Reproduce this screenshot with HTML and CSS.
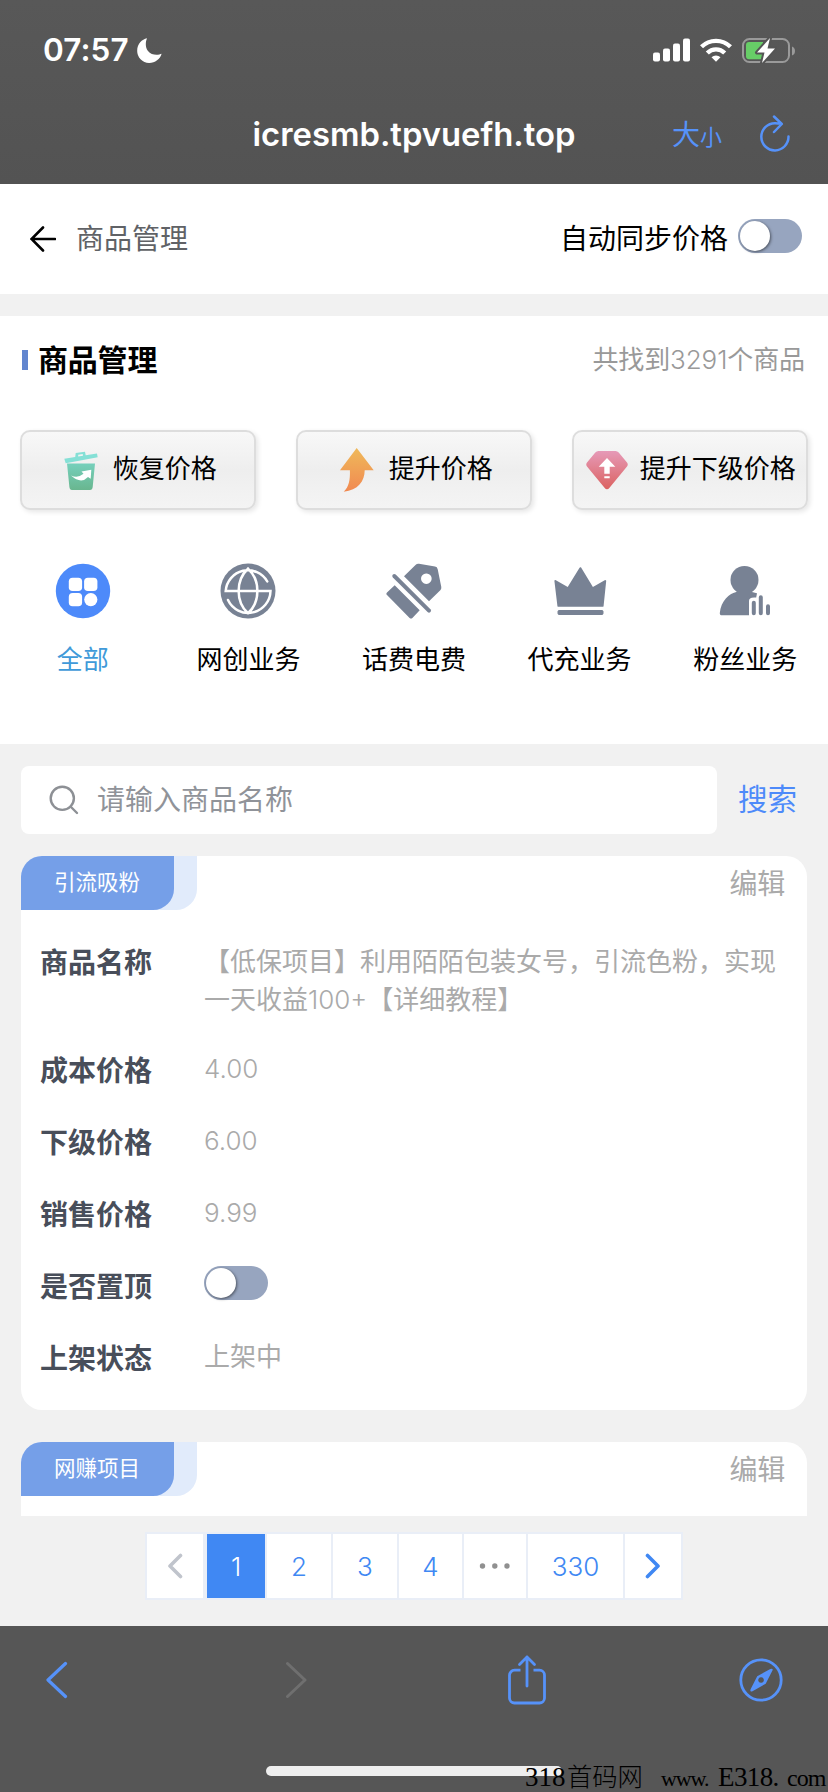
FILE: index.html
```html
<!DOCTYPE html>
<html lang="zh-CN">
<head>
<meta charset="utf-8">
<title>商品管理</title>
<link rel="stylesheet" href="styles.css">
</head>
<body>
<div class="screen">
  <div class="browser-top">
    <div class="status">
      <div class="clock"><span>07:57</span>
        <svg class="moon" width="25" height="25" viewBox="0 0 25 25"><path fill="#fff" d="M10 .2C5 1.2.2 6 .2 12.500A12 12 0 0 0 12.300 25C18 25 23.200 21 24.600 15.800 22 17 14.500 18 11 13 8 9 8.500 4 10 .2z"/></svg>
      </div>
      <div class="signals">
        <svg width="37" height="24" viewBox="0 0 37 24" fill="#fff"><rect y="14.500" width="7" height="9" rx="2"/><rect x="10" y="10.500" width="7" height="13" rx="2"/><rect x="20" y="5.500" width="7" height="18" rx="2"/><rect x="30" y=".5" width="7" height="23" rx="2"/></svg>
        <svg width="32" height="24" viewBox="0 0 32 24"><g fill="none" stroke="#fff" stroke-width="4.300"><path d="M1.500 8.800a20.500 20.500 0 0 1 29 0"/><path d="M7.300 15a12.200 12.200 0 0 1 17.400 0"/></g><path fill="#fff" d="M11.500 19.200a6.500 6.500 0 0 1 9 0L16 23.800z"/></svg>
        <svg width="53" height="27" viewBox="0 0 53 27"><rect x="1" y="2" width="46" height="23" rx="6.500" fill="none" stroke="#9a9a9a" stroke-width="2"/><path fill="#9a9a9a" d="M50 9.500q3 1 3 4.500t-3 4.500z"/><path fill="#67ce67" d="M7 5h14v17.300H7q-3 0-3-3V8q0-3 3-3z"/><path d="M28 1 15 15.500h7.500L20 26l13-14.500h-7.500z" fill="#fff" stroke="#555" stroke-width="4" paint-order="stroke" stroke-linejoin="round"/></svg>
      </div>
    </div>
    <div class="address">
      <span class="url">icresmb.tpvuefh.top</span>
      <span class="text-size"><span class="big">大</span><span class="small">小</span></span>
      <svg class="reload" width="32" height="38" viewBox="0 0 32 38" fill="none" stroke="#5692f9" stroke-width="2.500" stroke-linecap="round" stroke-linejoin="round"><path d="M29.500 21.500A13.600 13.600 0 1 1 16 8.200L22.500 8.700M15 1.500 22.800 9 15 17"/></svg>
    </div>
  </div>

  <header class="page-header">
    <svg width="26" height="26" viewBox="0 0 26 26" fill="none" stroke="#000" stroke-width="2.600" stroke-linecap="round"><path d="M25 13H1.500M13 1.500 1.500 13 13 24.500"/></svg>
    <h1 class="page-title">商品管理</h1>
    <span class="sync-label">自动同步价格</span>
    <span class="switch"></span>
  </header>

  <section class="panel">
    <div class="panel-head">
      <h2>商品管理</h2>
      <span class="count">共找到<span class="figure">3291</span>个商品</span>
    </div>
    <div class="actions">
      <button class="action">
        <svg width="34" height="44" viewBox="0 -3 34 44"><defs><linearGradient id="bin" x2="0" y2="1"><stop stop-color="#76d0bc"/><stop offset="1" stop-color="#69b68f"/></linearGradient></defs><path fill="#85e0d6" d="M.3 7.800 11.200 6l.5-4L21 .8 21.700 4.300 33 2.500l.7 3.700-32 6zM14.200 5.500l4.800-.8-.3-1.700-4.500.7z"/><path fill="url(#bin)" d="M3 12.500h28L28.700 36Q28.400 39 26 39H8q-2.300 0-2.600-3z"/><path fill="#fff" d="M7 24.500q7 3 12.500-1.700l-2-2.300 9.800-1.700-.6 9L24 26Q17 33.500 7 24.500z"/></svg>
        <span>恢复价格</span>
      </button>
      <button class="action">
        <svg width="34" height="44" viewBox="0 0 34 44"><defs><linearGradient id="rise" x2="0" y2="1"><stop stop-color="#efb95a"/><stop offset="1" stop-color="#f18951"/></linearGradient></defs><path fill="url(#rise)" d="M16.700 0 33.700 22.300h-9C24.700 33 18 42.500 3.700 43.700 9 39 10.200 32 9.900 22.300H0z"/></svg>
        <span>提升价格</span>
      </button>
      <button class="action wide">
        <svg width="42" height="44" viewBox="0 -3 42 44"><defs><linearGradient id="gem" x2="0" y2="1"><stop stop-color="#e69ab8"/><stop offset="1" stop-color="#db6260"/></linearGradient></defs><path fill="url(#gem)" d="M12.500 0h17q2 0 3.200 1.500L41 11.500q1.500 2 0 4L23.500 36.800q-2.500 3-5 0L1 15.500q-1.500-2 0-4l8.300-10Q10.500 0 12.500 0z"/><path fill="#fff" d="m21 7 8.300 8.700h-5.600v7h-5.400v-7h-5.600zM18.300 25.300h5.400v2h-5.400z"/></svg>
        <span>提升下级价格</span>
      </button>
    </div>
    <nav class="categories">
      <a class="category active">
        <svg width="56" height="56" viewBox="0 0 56 56"><circle cx="28" cy="28" r="27.200" fill="#4d8afa"/><g fill="#fff"><rect x="13.800" y="14.700" width="13.300" height="13.300" rx="3.800"/><rect x="29.100" y="14.700" width="13.300" height="13.300" rx="3.800"/><rect x="13.800" y="30" width="13.300" height="13.300" rx="3.800"/><circle cx="35.800" cy="36.600" r="6.600"/></g></svg>
        <span>全部</span>
      </a>
      <a class="category">
        <svg width="56" height="56" viewBox="0 0 56 56"><circle cx="28" cy="28" r="27.500" fill="#788294"/><path d="M8 37A22.300 22.300 0 0 0 50.500 28H5.700A22.300 22.300 0 0 1 47.300 18.500M28 5.700C15.500 17 15.500 39 28 50.300M28 5.700C40.500 17 40.500 39 28 50.300" fill="none" stroke="#fff" stroke-width="2.500" stroke-linecap="round"/></svg>
        <span>网创业务</span>
      </a>
      <a class="category">
        <svg width="56" height="56" viewBox="0 0 56 56" fill="#788294"><path fill-rule="evenodd" d="M18 13.300 29.500 2q1.500-1.500 3.500-1.200L49 3.500q2.300.4 2.700 2.700L55.300 24q.3 2-1 3.200L43 38.300zM40.300 10.400a5.300 5.300 0 1 0 .1 0z"/><path d="m8.300 13 34.700 34.700" stroke="#788294" stroke-width="4" stroke-linecap="round"/><path d="m8.700 22.300 25 25-7.300 7.600q-1.400 1.400-2.800 0L1 32q-1.300-1.300 0-2.600z"/></svg>
        <span>话费电费</span>
      </a>
      <a class="category">
        <svg width="56" height="56" viewBox="0 0 56 56" fill="#788294" stroke="#788294" stroke-linejoin="round"><path stroke-width="2" d="M28.400 5.200 40.500 25.300 53.200 18l-2.600 24.800H6.400L3.400 18l12.700 7.300z"/><rect x="6" y="47.500" width="45" height="4" rx="1" stroke-width="1"/></svg>
        <span>代充业务</span>
      </a>
      <a class="category">
        <svg width="56" height="56" viewBox="0 0 56 56" fill="#788294"><circle cx="27.500" cy="17" r="14"/><path d="M19 27h16v2l5 1.300-.8 4.200q-7.700-.8-7.200 4v13.800H5q-2.400 0-2.200-2.300C4 38 12 30.500 20 28.800z"/><path d="M36.800 39.700v10.600M43.800 34.300v16M51 43.300v7" stroke="#788294" stroke-width="4" stroke-linecap="round"/></svg>
        <span>粉丝业务</span>
      </a>
    </nav>
  </section>

  <main class="list">
    <div class="search">
      <div class="search-box">
        <svg width="30" height="30" viewBox="0 0 30 30" fill="none" stroke="#8d9095" stroke-width="2.400" stroke-linecap="round"><circle cx="13.300" cy="13.300" r="11.600"/><path d="m21.500 21.500 6.500 6.500"/></svg>
        <span>请输入商品名称</span>
      </div>
      <a class="search-go">搜索</a>
    </div>

    <article class="card">
      <div class="card-head">
        <div class="tag-back"><div class="tag">引流吸粉</div></div>
        <a class="edit">编辑</a>
      </div>
      <dl class="fields">
        <dt>商品名称</dt><dd class="name">【低保项目】利用陌陌包装女号，引流色粉，实现一天收益<span class="figure">100+</span>【详细教程】</dd>
        <dt>成本价格</dt><dd class="figure">4.00</dd>
        <dt>下级价格</dt><dd class="figure">6.00</dd>
        <dt>销售价格</dt><dd class="figure">9.99</dd>
        <dt>是否置顶</dt><dd class="toggle"><span class="switch"></span></dd>
        <dt>上架状态</dt><dd>上架中</dd>
      </dl>
    </article>

    <article class="card cut">
      <div class="card-head">
        <div class="tag-back"><div class="tag">网赚项目</div></div>
        <a class="edit">编辑</a>
      </div>
    </article>

    <div class="pager">
      <span class="page prev"><svg width="16" height="26" viewBox="0 0 16 26" fill="none" stroke="#c0c4cc" stroke-width="3.600" stroke-linecap="round" stroke-linejoin="round"><path d="M13.500 2.500 3 13l10.500 10.500"/></svg></span>
      <span class="page current">1</span>
      <span class="page">2</span>
      <span class="page">3</span>
      <span class="page four">4</span>
      <span class="page dots"><svg width="32" height="6" viewBox="0 0 32 6" fill="#909090"><circle cx="3.500" cy="3" r="2.700"/><circle cx="15.800" cy="3" r="2.700"/><circle cx="28" cy="3" r="2.700"/></svg></span>
      <span class="page last">330</span>
      <span class="page next"><svg width="16" height="26" viewBox="0 0 16 26" fill="none" stroke="#4088f3" stroke-width="3.600" stroke-linecap="round" stroke-linejoin="round"><path d="M2.500 2.500 13 13 2.500 23.500"/></svg></span>
    </div>
  </main>

  <footer class="browser-bottom">
    <div class="tools">
      <svg width="22" height="38" viewBox="0 0 22 38" fill="none" stroke="#5692f9" stroke-width="3.200" stroke-linecap="round" stroke-linejoin="round"><path d="M19.500 2.500 2 19l17.500 16.500"/></svg>
      <svg width="22" height="38" viewBox="0 0 22 38" fill="none" stroke="#6f6f6f" stroke-width="3" stroke-linecap="round" stroke-linejoin="round"><path d="M2.500 2.500 20 19 2.500 35.500"/></svg>
      <svg width="38" height="50" viewBox="0 0 38 50" fill="none" stroke="#5692f9" stroke-width="2.800"><path d="M12.500 15.200H6.500a5 5 0 0 0-5 5V43a5 5 0 0 0 5 5h25a5 5 0 0 0 5-5V20.200a5 5 0 0 0-5-5h-6"/><path stroke-linecap="round" stroke-linejoin="round" d="M19 31V2M11.500 9.500 19 2l7.500 7.500"/></svg>
      <svg width="44" height="44" viewBox="0 0 44 44"><circle cx="22" cy="22" r="20.200" fill="none" stroke="#5692f9" stroke-width="2.800"/><path fill="#5692f9" fill-rule="evenodd" d="M33.400 11q.6.600-.1 1.800L26.700 25.800l-13.200 7.400q-2.900 1-1.900-1.900l6.600-13.100L31.300 11q1.500-.6 2.100 0zM22 19.200a2.800 2.800 0 1 0 .1 0z"/></svg>
    </div>
    <div class="home-bar"></div>
    <div class="watermark"><span class="num">318</span><span class="han">首码网</span><span class="www">www.</span><span class="site">E318.</span><span class="com">com</span></div>
  </footer>
</div>
</body>
</html>
```
FILE: styles.css
```css
* { box-sizing: border-box; }
body, h1, h2, dl, dd { margin: 0; }
body {
  background: #f1f1f1;
  font-family: Inter, "Noto Sans CJK SC", sans-serif;
  color: #000;
}
svg { display: block; flex: none; }
.screen { width: 828px; height: 1792px; display: flex; flex-direction: column; overflow: hidden; }

/* browser chrome */
.browser-top { height: 184px; background: linear-gradient(#585858, #535353); flex: none; }
.status { height: 100px; padding: 0 33px 0 43px; display: flex; align-items: center; justify-content: space-between; }
.clock { display: flex; align-items: center; gap: 8px; color: #fff; font-size: 31.5px; font-weight: 600; letter-spacing: 0.1px; line-height: 40px; }
.signals { display: flex; align-items: center; gap: 10px; }
.address { height: 68px; display: grid; grid-template-columns: 1fr 324px 1fr; align-items: center; position: relative; }
.url { grid-column: 2; color: #fff; font-size: 32.8px; font-weight: 600; text-align: center; white-space: nowrap; }
.text-size { position: absolute; left: 672px; top: 15px; color: #5692f9; line-height: 40px; display: flex; align-items: baseline; }
.big { font-size: 28px; }
.small { font-size: 22px; }
.reload { position: absolute; left: 759px; top: 15px; }

.page-header { height: 110px; flex: none; background: #fff; display: flex; align-items: center; padding: 0 26px 0 30px; }
.page-title { font-size: 28px; font-weight: 400; color: #606266; margin-left: 20px; flex: 1; line-height: 40px; }
.sync-label { font-size: 28px; line-height: 40px; margin-right: 10px; }
.switch { display: block; width: 64px; height: 34px; border-radius: 17px; background: #97a5bf; padding: 2px; margin-bottom: 6px; }
.switch::before { content: ""; display: block; width: 30px; height: 30px; border-radius: 50%; background: #fff; box-shadow: 1px 1px 3px rgba(0, 0, 0, .5); }

/* management panel */
.panel { height: 428px; flex: none; margin-top: 22px; background: #fff; }
.panel-head { height: 88px; padding: 0 23px 0 22px; display: flex; align-items: center; justify-content: space-between; }
.panel-head h2 { font-size: 30px; line-height: 40px; font-weight: 700; display: flex; align-items: center; gap: 10px; letter-spacing: -0.2px; }
.panel-head h2::before { content: ""; width: 6px; height: 20px; background: #6286cf; }
.count { font-size: 26px; line-height: 38px; color: #999; letter-spacing: -0.1px; }
.figure { font-weight: 300; }
.actions { margin-top: 26px; padding: 0 20px; display: flex; justify-content: space-between; }
.action { width: 236px; height: 80px; border: 2px solid #ddd; border-radius: 10px; background: linear-gradient(#f8f8f8, #eee 50%, #f4f4f4); box-shadow: 2px 2px 5px rgba(0, 0, 0, .1); display: flex; align-items: center; justify-content: center; gap: 14.5px; padding: 0 0 0 5px; font: inherit; font-size: 26px; color: #000; }
.action span { line-height: 40px; padding-bottom: 2px; }
.action.wide { gap: 11.500px; padding-left: 2px; }
.categories { margin-top: 53px; display: grid; grid-template-columns: repeat(5, 1fr); }
.category { display: flex; flex-direction: column; align-items: center; gap: 21px; font-size: 26px; line-height: 40px; }
.category.active span { color: #409ad9; }

/* product list */
.list { height: 882px; flex: none; padding: 22px 21px 0; display: flex; flex-direction: column; }
.search { display: flex; align-items: center; height: 68px; }
.search-box { width: 696px; height: 68px; border-radius: 8px; background: #fff; display: flex; align-items: center; gap: 18px; padding-left: 28px; font-size: 28px; color: #909399; }
.search-box span { line-height: 40px; }
.search-go { margin-left: 21px; font-size: 29.5px; line-height: 40px; padding-bottom: 2px; color: #4d8afa; }
.card { margin-top: 22px; height: 554px; flex: none; border-radius: 21px; background: #fff; overflow: hidden; }
.card.cut { margin-top: 32px; height: 74px; border-radius: 21px 21px 0 0; }
.card-head { height: 54px; display: flex; justify-content: space-between; }
.tag-back { width: 176px; background: #e1ebfb; border-radius: 0 0 21px 0; }
.tag { width: 153px; height: 54px; background: #759fe8; border-radius: 0 0 21px 0; color: #fff; font-size: 21.5px; line-height: 53px; text-align: center; padding-right: 1px; }
.edit { margin-right: 22px; font-size: 28px; line-height: 56px; color: #aaa; letter-spacing: -0.3px; }
.fields { margin-top: 16px; padding: 0 20px 0 19px; display: grid; grid-template-columns: 164px 1fr; grid-template-rows: 108px repeat(5, 72px); }
.fields dt { font-size: 28px; line-height: 74px; font-weight: 700; color: #484e5a; }
.fields dd { font-size: 26px; line-height: 70px; color: #aaa; }
.fields dd.name { line-height: 38px; padding-top: 17px; margin-right: -12px; }
.toggle { display: flex; align-items: center; }

.pager { margin: 16px auto 0 124px; height: 68px; padding: 2px; background: #e9eef7; display: flex; gap: 2px; }
.page { width: 64px; background: #fff; color: #4088f3; font-size: 26px; font-weight: 300; display: flex; align-items: center; justify-content: center; }
.prev { width: 56px; margin-right: 2px; }
.current { width: 58px; background: #4088f3; color: #fff; }
.four { width: 63px; }
.dots { width: 62px; }
.last { width: 95px; }
.next { width: 56px; }

.browser-bottom { flex: 1; background: #565656; position: relative; }
.tools { height: 108px; padding: 0 44px 0 46px; display: grid; grid-template-columns: 239px 223px 231px 44px; align-items: center; }
.home-bar { width: 296px; height: 10px; border-radius: 5px; background: #eee; margin: 32px auto 0; }
.watermark { position: absolute; left: 525px; bottom: 0; display: flex; align-items: baseline; color: #000; font-family: "Liberation Serif", "Noto Sans CJK SC", serif; font-size: 27px; line-height: 26px; white-space: nowrap; }
.num { width: 42px; }
.han { width: 77px; font-size: 25.3px; font-weight: 300; font-family: "Noto Sans CJK SC", sans-serif; }
.www { margin-left: 17px; width: 57px; font-size: 22px; letter-spacing: -1.100px; }
.site { width: 69px; letter-spacing: -0.600px; }
.com { font-size: 24px; letter-spacing: -0.9px; }
```
